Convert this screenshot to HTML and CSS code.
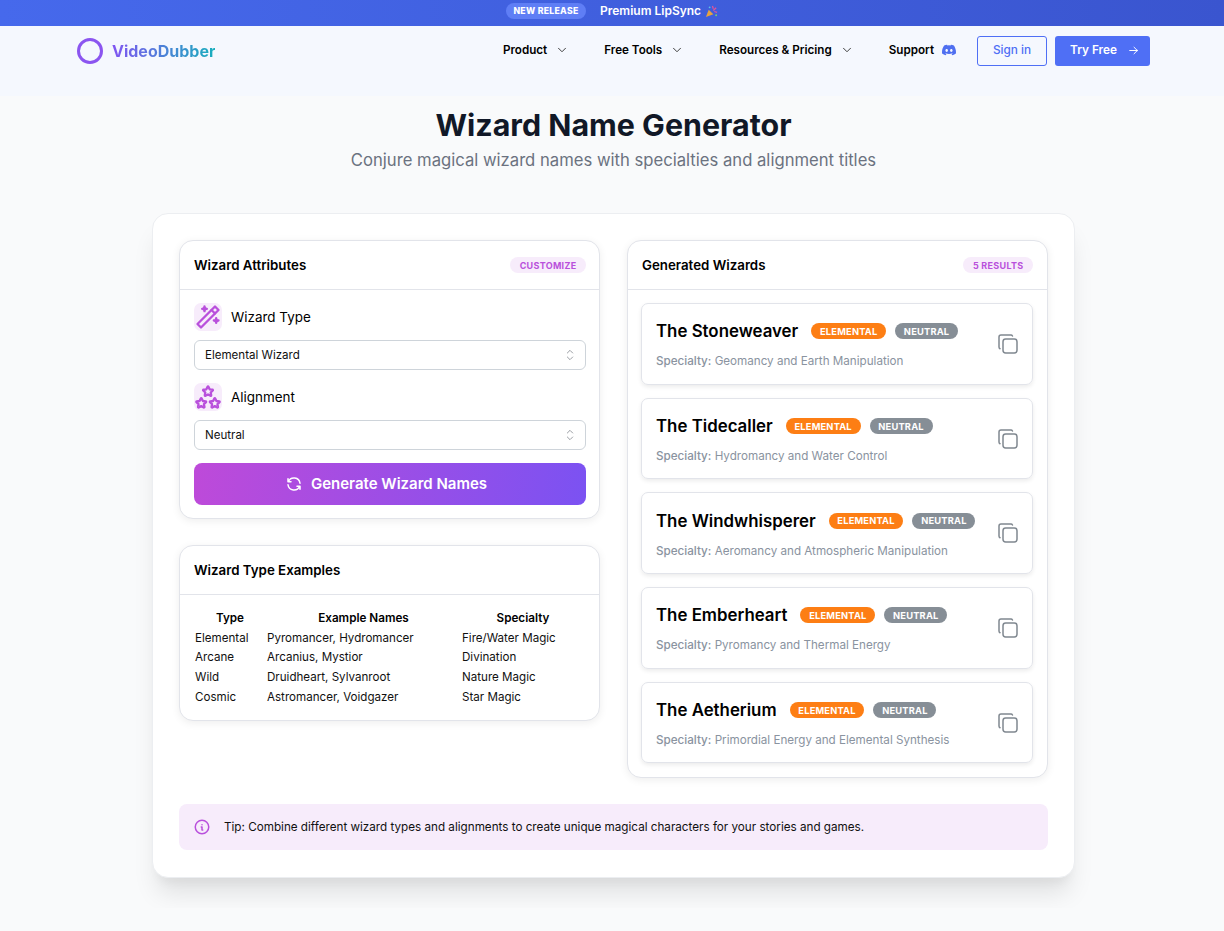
FILE: index.html
```html
<!DOCTYPE html>
<html lang="en">
<head>
<meta charset="utf-8">
<title>Wizard Name Generator</title>
<link rel="stylesheet" href="styles.css">
</head>
<body>
<div class="announce">
  <span class="pill-new">NEW RELEASE</span>
  <span class="announce-text">Premium LipSync</span>
  <svg class="popper" viewBox="0 0 14 14"><path d="M1 13l3-8 5 5z" fill="#e8a33d"/><path d="M8 1l1 3M12 3L9 6M13 8l-3-1" stroke="#e0559a" stroke-width="1.4" fill="none"/><circle cx="5" cy="2.5" r="1" fill="#5cc3e8"/><circle cx="12" cy="11" r="1" fill="#7bd06b"/></svg>
</div>
<header class="nav">
  <a class="logo">
    <svg class="logo-ring" viewBox="0 0 26 26"><circle cx="13" cy="13" r="11.5" fill="none" stroke="#8b55f0" stroke-width="3"/></svg>
    <span class="logo-text">VideoDubber</span>
  </a>
  <nav class="menu">
    <a class="menu-item">Product <svg class="chev" viewBox="0 0 24 24"><path d="M6 9l6 6l6 -6"/></svg></a>
    <a class="menu-item">Free Tools <svg class="chev" viewBox="0 0 24 24"><path d="M6 9l6 6l6 -6"/></svg></a>
    <a class="menu-item">Resources &amp; Pricing <svg class="chev" viewBox="0 0 24 24"><path d="M6 9l6 6l6 -6"/></svg></a>
    <a class="menu-item support">Support <svg class="discord" viewBox="0 0 24 24"><path d="M20.317 4.37a19.791 19.791 0 0 0-4.885-1.515.074.074 0 0 0-.079.037c-.21.375-.444.864-.608 1.25a18.27 18.27 0 0 0-5.487 0 12.64 12.64 0 0 0-.617-1.25.077.077 0 0 0-.079-.037A19.736 19.736 0 0 0 3.677 4.37a.07.07 0 0 0-.032.027C.533 9.046-.32 13.58.099 18.057a.082.082 0 0 0 .031.057 19.9 19.9 0 0 0 5.993 3.03.078.078 0 0 0 .084-.028 14.09 14.09 0 0 0 1.226-1.994.076.076 0 0 0-.041-.106 13.107 13.107 0 0 1-1.872-.892.077.077 0 0 1-.008-.128 10.2 10.2 0 0 0 .372-.292.074.074 0 0 1 .077-.01c3.928 1.793 8.18 1.793 12.062 0a.074.074 0 0 1 .078.01c.12.098.246.198.373.292a.077.077 0 0 1-.006.127 12.299 12.299 0 0 1-1.873.892.077.077 0 0 0-.041.107c.36.698.772 1.362 1.225 1.993a.076.076 0 0 0 .084.028 19.839 19.839 0 0 0 6.002-3.03.077.077 0 0 0 .032-.054c.5-5.177-.838-9.674-3.549-13.66a.061.061 0 0 0-.031-.03zM8.02 15.33c-1.183 0-2.157-1.085-2.157-2.419 0-1.333.956-2.419 2.157-2.419 1.21 0 2.176 1.096 2.157 2.42 0 1.333-.956 2.418-2.157 2.418zm7.975 0c-1.183 0-2.157-1.085-2.157-2.419 0-1.333.955-2.419 2.157-2.419 1.21 0 2.176 1.096 2.157 2.42 0 1.333-.946 2.418-2.157 2.418z"/></svg></a>
    <a class="btn-outline">Sign in</a>
    <a class="btn-solid">Try Free <svg class="arrow" viewBox="0 0 24 24"><path d="M5 12h14M13 18l6 -6M13 6l6 6"/></svg></a>
  </nav>
</header>
<main class="page">
  <h1 class="title">Wizard Name Generator</h1>
  <p class="subtitle">Conjure magical wizard names with specialties and alignment titles</p>
  <section class="shell">
    <div class="columns">
      <div class="col-left">
        <div class="panel">
          <div class="panel-head"><h2 class="panel-title">Wizard Attributes</h2><span class="chip">CUSTOMIZE</span></div>
          <div class="panel-body form">
            <div class="field-label">
              <span class="icon-box"><svg viewBox="0 0 24 24"><path d="M6 21l15 -15l-3 -3l-15 15l3 3"/><path d="M15 6l3 3"/><path d="M9 3a2 2 0 0 0 2 2a2 2 0 0 0 -2 2a2 2 0 0 0 -2 -2a2 2 0 0 0 2 -2"/><path d="M19 13a2 2 0 0 0 2 2a2 2 0 0 0 -2 2a2 2 0 0 0 -2 -2a2 2 0 0 0 2 -2"/></svg></span>
              <span>Wizard Type</span>
            </div>
            <div class="select">Elemental Wizard<svg class="sel-icon" viewBox="0 0 24 24"><path d="M8 9l4 -4l4 4"/><path d="M16 15l-4 4l-4 -4"/></svg></div>
            <div class="field-label">
              <span class="icon-box"><svg viewBox="0 0 24 24"><path d="M17.8 19.817l-2.172 1.138a.392 .392 0 0 1 -.568 -.41l.415 -2.411l-1.757 -1.707a.389 .389 0 0 1 .217 -.665l2.428 -.352l1.086 -2.193a.392 .392 0 0 1 .702 0l1.086 2.193l2.428 .352a.39 .39 0 0 1 .217 .665l-1.757 1.707l.414 2.41a.39 .39 0 0 1 -.567 .411l-2.172 -1.138z"/><path d="M6.2 19.817l-2.172 1.138a.392 .392 0 0 1 -.568 -.41l.415 -2.411l-1.757 -1.707a.389 .389 0 0 1 .217 -.665l2.428 -.352l1.086 -2.193a.392 .392 0 0 1 .702 0l1.086 2.193l2.428 .352a.39 .39 0 0 1 .217 .665l-1.757 1.707l.414 2.41a.39 .39 0 0 1 -.567 .411l-2.172 -1.138z"/><path d="M12 9.817l-2.172 1.138a.392 .392 0 0 1 -.568 -.41l.415 -2.411l-1.757 -1.707a.389 .389 0 0 1 .217 -.665l2.428 -.352l1.086 -2.193a.392 .392 0 0 1 .702 0l1.086 2.193l2.428 .352a.39 .39 0 0 1 .217 .665l-1.757 1.707l.414 2.41a.39 .39 0 0 1 -.567 .411l-2.172 -1.138z"/></svg></span>
              <span>Alignment</span>
            </div>
            <div class="select">Neutral<svg class="sel-icon" viewBox="0 0 24 24"><path d="M8 9l4 -4l4 4"/><path d="M16 15l-4 4l-4 -4"/></svg></div>
            <button class="generate"><svg viewBox="0 0 24 24"><path d="M20 11a8.1 8.1 0 0 0 -15.5 -2m-.5 -4v4h4"/><path d="M4 13a8.1 8.1 0 0 0 15.5 2m.5 4v-4h-4"/></svg>Generate Wizard Names</button>
          </div>
        </div>
        <div class="panel">
          <div class="panel-head"><h2 class="panel-title">Wizard Type Examples</h2></div>
          <div class="panel-body table-body">
            <table class="examples">
              <thead><tr><th class="c1">Type</th><th class="c2">Example Names</th><th>Specialty</th></tr></thead>
              <tbody>
                <tr><td>Elemental</td><td>Pyromancer, Hydromancer</td><td>Fire/Water Magic</td></tr>
                <tr><td>Arcane</td><td>Arcanius, Mystior</td><td>Divination</td></tr>
                <tr><td>Wild</td><td>Druidheart, Sylvanroot</td><td>Nature Magic</td></tr>
                <tr><td>Cosmic</td><td>Astromancer, Voidgazer</td><td>Star Magic</td></tr>
              </tbody>
            </table>
          </div>
        </div>
      </div>
      <div class="panel">
        <div class="panel-head"><h2 class="panel-title">Generated Wizards</h2><span class="chip">5 RESULTS</span></div>
        <div class="panel-body results">
          <article class="result"><div class="result-main"><div class="result-top"><h3 class="name">The Stoneweaver</h3><span class="tag tag-el">ELEMENTAL</span><span class="tag tag-ne">NEUTRAL</span></div><p class="spec"><b>Specialty:</b> Geomancy and Earth Manipulation</p></div><svg class="copy" viewBox="0 0 24 24"><path d="M7 9.667a2.667 2.667 0 0 1 2.667 -2.667h8.666a2.667 2.667 0 0 1 2.667 2.667v8.666a2.667 2.667 0 0 1 -2.667 2.667h-8.666a2.667 2.667 0 0 1 -2.667 -2.667z"/><path d="M4.012 16.737a2.005 2.005 0 0 1 -1.012 -1.737v-10c0 -1.1 .9 -2 2 -2h10c.75 0 1.158 .385 1.5 1"/></svg></article>
          <article class="result"><div class="result-main"><div class="result-top"><h3 class="name">The Tidecaller</h3><span class="tag tag-el">ELEMENTAL</span><span class="tag tag-ne">NEUTRAL</span></div><p class="spec"><b>Specialty:</b> Hydromancy and Water Control</p></div><svg class="copy" viewBox="0 0 24 24"><path d="M7 9.667a2.667 2.667 0 0 1 2.667 -2.667h8.666a2.667 2.667 0 0 1 2.667 2.667v8.666a2.667 2.667 0 0 1 -2.667 2.667h-8.666a2.667 2.667 0 0 1 -2.667 -2.667z"/><path d="M4.012 16.737a2.005 2.005 0 0 1 -1.012 -1.737v-10c0 -1.1 .9 -2 2 -2h10c.75 0 1.158 .385 1.5 1"/></svg></article>
          <article class="result"><div class="result-main"><div class="result-top"><h3 class="name">The Windwhisperer</h3><span class="tag tag-el">ELEMENTAL</span><span class="tag tag-ne">NEUTRAL</span></div><p class="spec"><b>Specialty:</b> Aeromancy and Atmospheric Manipulation</p></div><svg class="copy" viewBox="0 0 24 24"><path d="M7 9.667a2.667 2.667 0 0 1 2.667 -2.667h8.666a2.667 2.667 0 0 1 2.667 2.667v8.666a2.667 2.667 0 0 1 -2.667 2.667h-8.666a2.667 2.667 0 0 1 -2.667 -2.667z"/><path d="M4.012 16.737a2.005 2.005 0 0 1 -1.012 -1.737v-10c0 -1.1 .9 -2 2 -2h10c.75 0 1.158 .385 1.5 1"/></svg></article>
          <article class="result"><div class="result-main"><div class="result-top"><h3 class="name">The Emberheart</h3><span class="tag tag-el">ELEMENTAL</span><span class="tag tag-ne">NEUTRAL</span></div><p class="spec"><b>Specialty:</b> Pyromancy and Thermal Energy</p></div><svg class="copy" viewBox="0 0 24 24"><path d="M7 9.667a2.667 2.667 0 0 1 2.667 -2.667h8.666a2.667 2.667 0 0 1 2.667 2.667v8.666a2.667 2.667 0 0 1 -2.667 2.667h-8.666a2.667 2.667 0 0 1 -2.667 -2.667z"/><path d="M4.012 16.737a2.005 2.005 0 0 1 -1.012 -1.737v-10c0 -1.1 .9 -2 2 -2h10c.75 0 1.158 .385 1.5 1"/></svg></article>
          <article class="result"><div class="result-main"><div class="result-top"><h3 class="name">The Aetherium</h3><span class="tag tag-el">ELEMENTAL</span><span class="tag tag-ne">NEUTRAL</span></div><p class="spec"><b>Specialty:</b> Primordial Energy and Elemental Synthesis</p></div><svg class="copy" viewBox="0 0 24 24"><path d="M7 9.667a2.667 2.667 0 0 1 2.667 -2.667h8.666a2.667 2.667 0 0 1 2.667 2.667v8.666a2.667 2.667 0 0 1 -2.667 2.667h-8.666a2.667 2.667 0 0 1 -2.667 -2.667z"/><path d="M4.012 16.737a2.005 2.005 0 0 1 -1.012 -1.737v-10c0 -1.1 .9 -2 2 -2h10c.75 0 1.158 .385 1.5 1"/></svg></article>
        </div>
      </div>
    </div>
    <div class="tip"><svg viewBox="0 0 24 24"><path d="M3 12a9 9 0 1 0 18 0a9 9 0 0 0 -18 0"/><path d="M12 9h.01"/><path d="M11 12h1v4h1"/></svg><span>Tip: Combine different wizard types and alignments to create unique magical characters for your stories and games.</span></div>
  </section>
</main>
</body>
</html>
```
FILE: styles.css
```css
* { box-sizing: border-box; }
html, body { margin: 0; padding: 0; }
body { background: #f9fafb; font-family: Inter, "Liberation Sans", sans-serif; color: #000; }
h1, h2, h3, p { margin: 0; }

.announce { height: 26px; background: linear-gradient(90deg, #4669ec, #3a55cf); display: flex; align-items: center; justify-content: center; gap: 14px; color: #fff; padding-bottom: 4px; }
.pill-new { height: 16px; padding: 0 7.5px; border-radius: 8px; background: #5f7ef5; font-size: 8.7px; font-weight: 800; letter-spacing: .3px; display: flex; align-items: center; }
.announce-text { font-size: 12px; font-weight: 600; margin-right: -10px; padding-bottom: 1px; }
.popper { width: 13px; height: 13px; }

.nav { height: 70px; background: #f5f8fe; display: flex; justify-content: space-between; align-items: flex-start; padding: 10px 74px 0 77px; }
.logo { display: flex; align-items: center; gap: 9px; height: 30px; }
.logo-ring { width: 26px; height: 26px; }
.logo-text { font-size: 16px; font-weight: 700; background: linear-gradient(90deg, #8155f2, #18aebd); -webkit-background-clip: text; background-clip: text; color: transparent; }
.menu { display: flex; align-items: center; height: 30px; }
.menu-item { display: flex; align-items: center; gap: 8px; font-size: 11.65px; font-weight: 600; margin-right: 35px; white-space: nowrap; padding-bottom: 2px; }
.support { margin-right: 21px; }
.chev { width: 14px; height: 14px; fill: none; stroke: #333; stroke-width: 1.6; stroke-linecap: round; stroke-linejoin: round; }
.discord { width: 14px; height: 14px; fill: #4f6ff0; }
.btn-outline { width: 70px; height: 30px; border: 1px solid #4f6ff5; border-radius: 3px; color: #4f6ff5; font-size: 11.8px; font-weight: 500; display: flex; align-items: center; justify-content: center; margin-right: 8px; padding-bottom: 2px; }
.btn-solid { width: 95px; height: 30px; border-radius: 3px; background: #4f6ff5; color: #fff; font-size: 11.8px; font-weight: 600; display: flex; align-items: center; justify-content: center; gap: 10px; padding: 0 0 2px 5px; }
.arrow { width: 13px; height: 13px; fill: none; stroke: #fff; stroke-width: 1.8; stroke-linecap: round; stroke-linejoin: round; }

.page { padding-bottom: 30px; }
.title { font-size: 30.4px; font-weight: 700; line-height: 40px; margin-top: 9px; padding-left: 3px; text-align: center; color: #111827; }
.subtitle { font-size: 16.65px; line-height: 24px; margin-top: 3px; padding-left: 3px; text-align: center; color: #6b7280; }
.shell { width: 923px; margin: 41px 0 0 152px; padding: 26px 26px 27px; background: #fff; border: 1px solid #eceef1; border-radius: 16px; box-shadow: 0 20px 25px -5px rgba(0, 0, 0, .1), 0 10px 10px -5px rgba(0, 0, 0, .04); }
.columns { display: grid; grid-template-columns: 421px 421px; gap: 27px; align-items: start; }
.col-left { display: flex; flex-direction: column; gap: 26px; }
.col-left .chip { margin-right: -1px; }
.panel { background: #fff; border: 1px solid #e2e4ea; border-radius: 14px; box-shadow: 0 2px 8px rgba(0, 0, 0, .07); }
.panel-head { height: 49px; border-bottom: 1px solid #e2e4ea; padding: 0 14px; display: flex; align-items: center; justify-content: space-between; }
.panel-title { font-size: 13.3px; font-weight: 600; }
.chip { height: 16px; padding: 0 9.5px; border-radius: 8px; background: #f7ecfb; color: #b950dc; font-size: 9px; font-weight: 700; letter-spacing: .3px; display: flex; align-items: center; }
.panel-body { padding: 13px 13px 13px 14px; }

.form { display: flex; flex-direction: column; }
.field-label { display: flex; align-items: center; gap: 9px; font-size: 13.45px; font-weight: 400; height: 28px; margin-bottom: 9px; }
.icon-box { width: 28px; height: 28px; border-radius: 7px; background: #f7ecfb; display: flex; align-items: center; justify-content: center; }
.icon-box svg { width: 28px; height: 28px; fill: none; stroke: #b950dc; stroke-width: 2; stroke-linecap: round; stroke-linejoin: round; }
.select { height: 30px; border: 1px solid #ced4da; border-radius: 6px; padding: 0 10px; font-size: 11.55px; display: flex; align-items: center; justify-content: space-between; margin-bottom: 13px; background: #fff; color: #111; }
.sel-icon { width: 16px; height: 16px; fill: none; stroke: #8a8f96; stroke-width: 1.3; stroke-linecap: round; stroke-linejoin: round; margin-right: -3px; }
.generate { height: 42px; border: 0; border-radius: 8px; background: linear-gradient(100deg, #be4ad9, #7b52f2); color: #fff; font: 600 15px Inter, sans-serif; display: flex; align-items: center; justify-content: center; gap: 8px; padding: 0 8px 2px 0; }
.generate svg { width: 18px; height: 18px; fill: none; stroke: #fff; stroke-width: 2; stroke-linecap: round; stroke-linejoin: round; margin-top: 2px; }

.table-body { padding: 13px 14px 11px 12px; }
.examples { width: 100%; font-size: 11.6px; line-height: 15.73px; color: #111; }
.examples th { font-size: 11.7px; font-weight: 600; color: #000; padding-left: 3px; }
.examples th.c1 { width: 70px; }
.examples th.c2 { width: 193px; }

.results { display: flex; flex-direction: column; gap: 13px; padding: 13px 14px 13.5px 13px; }
.result { height: 81.7px; border: 1px solid #e2e4ea; border-radius: 7px; box-shadow: 0 2px 4px rgba(0, 0, 0, .08); padding: 0 14px; display: flex; align-items: center; justify-content: space-between; }
.result-main { padding-bottom: 2px; }
.result-top { display: flex; align-items: center; gap: 9px; height: 28px; margin-bottom: 9px; }
.name { font-size: 16.85px; font-weight: 600; margin-right: 4px; }
.tag { height: 16px; padding: 0 8.75px; border-radius: 8px; color: #fff; font-size: 9.3px; font-weight: 700; letter-spacing: .2px; display: flex; align-items: center; }
.tag-el { background: #fd7e14; }
.tag-ne { background: #868e96; }
.spec { font-size: 11.65px; color: #8a93a0; }
.spec b { font-weight: 500; }
.copy { width: 24px; height: 24px; fill: none; stroke: #808890; stroke-width: 1.5; stroke-linecap: round; stroke-linejoin: round; margin-right: -1.5px; }

.tip { height: 46px; margin-top: 26px; background: #f7ecfb; border-radius: 8px; padding: 0 14px; display: flex; align-items: center; gap: 13px; font-size: 11.68px; color: #111; }
.tip svg { width: 18px; height: 18px; fill: none; stroke: #b950dc; stroke-width: 2; stroke-linecap: round; stroke-linejoin: round; }
```
